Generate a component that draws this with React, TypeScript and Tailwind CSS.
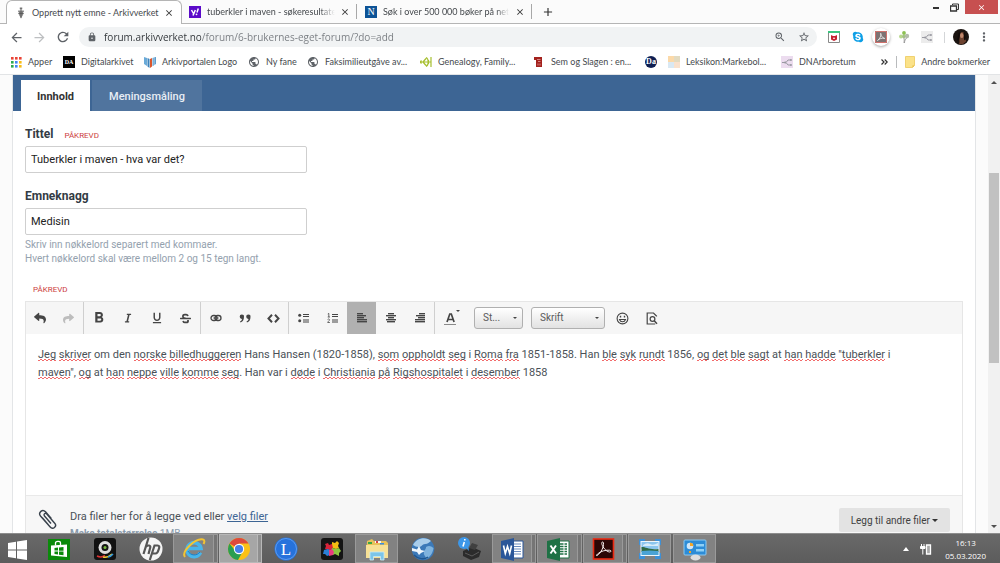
import React from 'react';
import {
  MdArrowBack, MdArrowForward, MdRefresh, MdLock, MdZoomIn, MdStarBorder, MdMoreVert, MdClose, MdAdd,
  MdFormatBold, MdFormatUnderlined, MdPublic,
} from 'react-icons/md';
import { FaReply, FaShare, FaItalic, FaStrikethrough, FaSkype } from 'react-icons/fa';

/* ---------- favicons and bookmark icons ---------- */

function CrestIcon() {
  return (
    <svg viewBox="0 0 12 14" className="h-3 w-3 shrink-0">
      <path d="M4.500 .5h3v2h-3zM3.500 4h5v5L6 13 3.500 9z" fill="#8a8a8a" />
      <path d="M6 1v12M2.500 4.500l1.500 1M9.500 4.500l-1.500 1M2.800 7.500h6.400" stroke="#555" strokeWidth="1" />
    </svg>
  );
}

function YahooIcon() {
  return (
    <svg viewBox="0 0 12 12" className="h-3 w-3 shrink-0">
      <rect width="12" height="12" fill="#5b0bc9" />
      <path d="M2.500 4l2 3.500M6.300 4L4 9.500M9.300 2.500L8 6.500" stroke="#fff" strokeWidth="1.500" fill="none" />
      <circle cx="7.500" cy="8.300" r=".9" fill="#fff" />
    </svg>
  );
}

function LetterBadge({ text, className }: { text: string; className: string }) {
  return (
    <span className={`flex h-3 w-3 shrink-0 items-center justify-center font-['Liberation_Serif',serif] leading-none ${className}`}>
      {text}
    </span>
  );
}

function AppsIcon() {
  const colors = ['#e94335', '#e94335', '#e94335', '#2da94f', '#4285f4', '#f9bc15', '#2da94f', '#4285f4', '#f9bc15'];
  return (
    <svg viewBox="0 0 11 11" className="h-[11px] w-[11px] shrink-0">
      {colors.map((c, i) => (
        <rect key={i} x={(i % 3) * 4} y={Math.floor(i / 3) * 4} width="2.600" height="2.600" fill={c} />
      ))}
    </svg>
  );
}

function PortalIcon() {
  return (
    <svg viewBox="0 0 12 12" className="h-3 w-3 shrink-0">
      <path d="M0 1l3 1v8L0 8z" fill="#6aaad8" />
      <path d="M3.500 2l2 1v9l-2-1.500z" fill="#3d83bb" />
      <path d="M6 3l2-1v8.500L6 12z" fill="#d9562e" />
      <path d="M8.500 2l1.300-.5v8l-1.300.8zM10.300 1.300L12 1v7l-1.700 1z" fill="#5d9ccd" />
    </svg>
  );
}

function GeniIcon() {
  return (
    <svg viewBox="0 0 12 12" className="h-3 w-3 shrink-0" fill="none" stroke="#a6bf2f" strokeWidth="1.200">
      <path d="M0 6h11M3 6l3-3.500M3 6l3 3.500M6 1.500c3 1.500 3 7.500 0 9M8.500 4v4M11 1v10M1.500 4.500L0 6l1.500 1.500" />
    </svg>
  );
}

function SemIcon() {
  return (
    <svg viewBox="0 0 12 12" className="h-3 w-3 shrink-0">
      <path d="M1 1h8v10H3V4H1z" fill="#a3211d" />
      <path d="M4 3.500h3.500M5 5.500h2.500M5 7.500v2M7 7.500v2" stroke="#e3a09c" strokeWidth=".8" />
    </svg>
  );
}

function QuiltIcon() {
  return (
    <svg viewBox="0 0 12 12" className="h-3 w-3 shrink-0">
      <rect width="6" height="6" fill="#fbd9a9" />
      <rect x="6" width="6" height="6" fill="#e2dac0" />
      <rect y="6" width="6" height="6" fill="#d9e8f3" />
      <rect x="6" y="6" width="6" height="6" fill="#f9e1cd" />
    </svg>
  );
}

function BranchIcon({ fill }: { fill: string }) {
  return (
    <svg viewBox="0 0 12 12" className="h-3 w-3 shrink-0">
      <rect width="12" height="12" fill={fill} />
      <path d="M1 6.500h4l2-2.500h4M5 6.500l2 2.500h4" stroke="#9a9aa2" strokeWidth="1" fill="none" />
      <path d="M3.500 5.500h1.500v2H3.500zM9 3.300h1.500v1.500H9zM9 8.300h1.500v1.500H9z" fill="#9a9aa2" />
    </svg>
  );
}

function FolderIcon() {
  return (
    <svg viewBox="0 0 10 12" className="h-3 w-[10px] shrink-0">
      <path d="M.5.5h9v9l-2 2h-7z" fill="#fbe289" stroke="#ecc95c" strokeWidth=".8" />
      <path d="M7.500 11.500v-2h2z" fill="#e3b93f" />
    </svg>
  );
}

/* ---------- browser frame ---------- */

function TabStrip() {
  return (
    <div className="flex h-6 items-stretch bg-[#fbfbfb] font-[Lato,sans-serif] text-[9px] text-[#45494d]">
      <div className="w-[6px] border-b border-[#b5b5b5]" />
      <div className="flex w-[176px] items-center rounded-t-md border border-b-0 border-[#b5b5b5] bg-white pl-2">
        <CrestIcon />
        <span className="ml-[5px] w-[132px] whitespace-nowrap">Opprett nytt emne - Arkivverket</span>
        <button aria-label="Lukk fane"><MdClose className="h-[10px] w-[10px] text-[#333]" /></button>
      </div>
      <div className="flex flex-1 items-center border-b border-[#b5b5b5] pl-[7px]">
        <YahooIcon />
        <span className="ml-[6px] w-[128px] overflow-hidden whitespace-nowrap [mask-image:linear-gradient(to_right,#000_88%,transparent)]">
          tuberkler i maven - søkeresultater
        </span>
        <button aria-label="Lukk fane" className="ml-[5px]"><MdClose className="h-[10px] w-[10px] text-[#333]" /></button>
        <div className="mr-2 ml-[6px] h-[15px] w-px bg-[#a8a8a8]" />
        <LetterBadge text="N" className="bg-[#0d5396] text-[10px] text-white" />
        <span className="ml-[6px] w-[126px] overflow-hidden whitespace-nowrap [mask-image:linear-gradient(to_right,#000_90%,transparent)]">
          Søk i over 500 000 bøker på nett
        </span>
        <button aria-label="Lukk fane" className="ml-[6px]"><MdClose className="h-[10px] w-[10px] text-[#333]" /></button>
        <div className="mr-[9px] ml-[6px] h-[15px] w-px bg-[#a8a8a8]" />
        <button aria-label="Ny fane"><MdAdd className="h-[14px] w-[14px] text-[#333]" /></button>
        <div className="ml-auto flex h-[14px] self-start pr-[2px]">
          <button aria-label="Minimer" className="flex w-[14px] items-end justify-center pb-[5px]">
            <span className="h-[2px] w-[6px] bg-[#333]" />
          </button>
          <button aria-label="Gjenopprett" className="mr-[2px] flex w-[20px] items-center justify-end">
            <svg viewBox="0 0 9 9" className="mr-1 h-[9px] w-[9px]" fill="none" stroke="#333">
              <path d="M2.500 2V1h6v5.500H7" />
              <path d="M.5 3h6v5h-6z" strokeWidth="1.300" />
            </svg>
          </button>
          <button aria-label="Lukk" className="flex w-[33px] items-center justify-center bg-[#c75050]">
            <MdClose className="h-[9px] w-[9px] text-white" />
          </button>
        </div>
      </div>
    </div>
  );
}

function AddressBar() {
  return (
    <div className="flex h-[26px] items-center bg-white pr-[9px] pl-[9px] text-[#5f6368]">
      <button aria-label="Tilbake"><MdArrowBack className="h-[15px] w-[15px]" /></button>
      <button aria-label="Frem" className="ml-2"><MdArrowForward className="h-[15px] w-[15px] text-[#bdbfc1]" /></button>
      <button aria-label="Last inn på nytt" className="ml-2"><MdRefresh className="h-4 w-4" /></button>
      <div className="ml-2 flex h-5 flex-1 items-center rounded-full bg-[#f1f3f4] pr-[7px] pl-2">
        <MdLock className="h-[10px] w-[10px]" />
        <input
          type="text"
          aria-label="Adresse"
          defaultValue="forum.arkivverket.no/forum/6-brukernes-eget-forum/?do=add"
          className="ml-[7px] flex-1 bg-[linear-gradient(90deg,#2f3337_97px,#777b80_97px)] bg-clip-text text-[10px] text-transparent outline-none"
        />
        <button aria-label="Zoom"><MdZoomIn className="h-3 w-3" /></button>
        <button aria-label="Bokmerk siden" className="ml-3"><MdStarBorder className="h-3 w-3" /></button>
      </div>
      <div className="ml-[11px] flex items-center">
        <svg viewBox="0 0 12 12" className="mr-3 h-3 w-3">
          <path d="M.5.5h11v11H.5z" fill="#fff" stroke="#888" />
          <path d="M0 0h12v2H0z" fill="#3bc47f" />
          <path d="M3 4l2 1h2l2-1v4.500L6 10 3 8.500z" fill="#c4202f" />
          <path d="M5 6.500L6 7l1-.5v1L6 8l-1-.5z" fill="#fff" />
        </svg>
        <FaSkype className="mr-2 h-3 w-3 text-[#0d9fe6]" />
        <span className="mr-2 flex h-[18px] w-[18px] items-center justify-center rounded-full bg-white shadow-[0_1px_3px_rgba(0,0,0,0.35)]">
          <svg viewBox="0 0 12 12" className="h-3 w-3">
            <rect width="12" height="12" fill="#7d7272" />
            <path d="M.5.5h11v11H.5z" fill="none" stroke="#d0716c" />
            <path d="M2.500 9.500C5 8 6.500 4 5.800 2.500S6 7 9.800 7.500C7 6.500 4 8 2.500 9.500z" fill="none" stroke="#eee" strokeWidth=".8" />
          </svg>
        </span>
        <svg viewBox="0 0 12 12" className="mr-[11px] h-3 w-3">
          <path d="M6 12c.5-3 .3-5-1-7M6.500 12c0-2 .5-3 2-5" stroke="#999" fill="none" />
          <circle cx="3" cy="5.500" r="1.900" fill="#b7d88c" />
          <circle cx="6" cy="2" r="1.900" fill="#8cc152" />
          <circle cx="9" cy="5" r="2.200" fill="#b4bcac" />
          <circle cx="5.800" cy="5.500" r="1.700" fill="#a3bf85" />
        </svg>
        <BranchIcon fill="#ececec" />
        <div className="mr-2 ml-[11px] h-[11px] w-px bg-[#d4d6d8]" />
        <svg viewBox="0 0 16 16" className="h-4 w-4">
          <circle cx="8" cy="8" r="8" fill="#1b1411" />
          <path d="M9 3c2.500 0 3 3 2.500 6 1 1 1.500 2 1.500 3.500A7 7 0 016 15c1-2 0-3.500.5-5S6.500 3 9 3z" fill="#6d4230" />
          <ellipse cx="8.800" cy="6.500" rx="1.800" ry="2.600" fill="#bf876c" />
          <path d="M6.500 3.500c-1 2-.5 6-2 8M11 4c1.500 2 0 5 1 7" stroke="#130c0a" strokeWidth="1.500" fill="none" />
        </svg>
        <button aria-label="Meny" className="ml-2"><MdMoreVert className="h-[14px] w-[14px]" /></button>
      </div>
    </div>
  );
}

const bookmarks: { label: string; icon: React.ReactNode; width: string }[] = [
  { label: 'Apper', icon: <AppsIcon />, width: 'w-[52px]' },
  { label: 'Digitalarkivet', icon: <LetterBadge text="DA" className="bg-black text-[6px] font-bold text-white" />, width: 'w-[81px]' },
  { label: 'Arkivportalen Logo', icon: <PortalIcon />, width: 'w-[104px]' },
  { label: 'Ny fane', icon: <MdPublic className="h-3 w-3 shrink-0 text-[#5f6368]" />, width: 'w-[59px]' },
  { label: 'Faksimilieutgåve av...', icon: <MdPublic className="h-3 w-3 shrink-0 text-[#5f6368]" />, width: 'w-[113px]' },
  { label: 'Genealogy, Family...', icon: <GeniIcon />, width: 'w-[113px]' },
  { label: 'Sem og Slagen : en...', icon: <SemIcon />, width: 'w-[112px]' },
  { label: '', icon: <LetterBadge text="Da" className="rounded-full bg-[#0e1f52] text-[8px] font-bold text-white" />, width: 'w-[23px]' },
  { label: 'Leksikon:Markebol...', icon: <QuiltIcon />, width: 'w-[113px]' },
  { label: 'DNArboretum', icon: <BranchIcon fill="#ecdcef" />, width: 'w-[88px]' },
];

function BookmarkBar() {
  return (
    <nav className="flex h-[25px] items-center border-b border-[#e2e4e6] bg-white pr-[10px] pl-[11px] font-[Lato,sans-serif] text-[9px] text-[#45494d]">
      {bookmarks.map((b, i) => (
        <a key={i} href="#" aria-label={b.label || 'Da'} className={`flex shrink-0 items-center gap-[6px] whitespace-nowrap ${b.width}`}>
          {b.icon}
          {b.label}
        </a>
      ))}
      <div className="ml-auto flex items-center">
        <button aria-label="Flere bokmerker">
          <svg viewBox="0 0 7 6" className="h-[6px] w-[7px]" fill="none" stroke="#333" strokeWidth="1.200">
            <path d="M.5.5L3 3 .5 5.500M3.700.5L6.200 3 3.700 5.500" />
          </svg>
        </button>
        <div className="mr-2 ml-2 h-3 w-px bg-[#b9bbbd]" />
        <a href="#" className="flex items-center gap-[6px] whitespace-nowrap"><FolderIcon />Andre bokmerker</a>
      </div>
    </nav>
  );
}

/* ---------- editor ---------- */

function Tool({ label, active, children }: { label: string; active?: boolean; children: React.ReactNode }) {
  return (
    <button
      type="button"
      aria-label={label}
      className={`flex w-[29px] items-center justify-center ${active ? 'bg-[#b1b1b1]' : ''}`}
    >
      {children}
    </button>
  );
}

function Lines({ rows }: { rows: [number, number][] }) {
  return (
    <svg viewBox="0 0 10 10" className="h-[10px] w-[10px]" fill="currentColor">
      {rows.map(([x, w], i) => (
        <rect key={i} x={x} y={i * 2} width={w} height="1.400" />
      ))}
    </svg>
  );
}

function ToolGroup({ children }: { children: React.ReactNode }) {
  return <div className="flex border-r border-[#cfcfcf] first:-ml-px">{children}</div>;
}

function Toolbar() {
  return (
    <div className="flex h-8 items-stretch bg-[#f6f6f6] text-[#454545]">
      <ToolGroup>
        <Tool label="Angre"><FaReply className="h-3 w-3" /></Tool>
        <Tool label="Gjør om"><FaShare className="h-[11px] w-[11px] text-[#bdbdbd]" /></Tool>
      </ToolGroup>
      <ToolGroup>
        <Tool label="Fet"><MdFormatBold className="h-[18px] w-[18px]" /></Tool>
        <Tool label="Kursiv"><FaItalic className="h-[10px] w-[10px]" /></Tool>
        <Tool label="Understreking"><MdFormatUnderlined className="h-[14px] w-[14px]" /></Tool>
        <Tool label="Gjennomstreking"><FaStrikethrough className="h-[11px] w-[11px]" /></Tool>
      </ToolGroup>
      <ToolGroup>
        <Tool label="Lenke">
          <svg viewBox="0 0 12 8" className="h-2 w-3" fill="none" stroke="currentColor">
            <rect x="1" y="1.500" width="6" height="5" rx="2.500" strokeWidth="1.300" />
            <rect x="5" y="1.500" width="6" height="5" rx="2.500" strokeWidth="1.300" />
            <path d="M3.500 4h5" strokeWidth="1.200" />
          </svg>
        </Tool>
        <Tool label="Sitat">
          <svg viewBox="0 0 12 9" className="h-[9px] w-3" fill="currentColor">
            <path d="M2.800.5a2.200 2.200 0 012.200 2.400C5 6 3.500 7.800 1.500 8.500L1 7.500c1.200-.6 1.900-1.500 2-2.600A2.200 2.200 0 012.800.5zM9.300.5a2.200 2.200 0 012.200 2.400c0 3.100-1.500 4.900-3.500 5.600l-.5-1c1.200-.6 1.900-1.500 2-2.600A2.200 2.200 0 019.300.5z" />
          </svg>
        </Tool>
        <Tool label="Kode">
          <svg viewBox="0 0 13 9" className="h-[9px] w-[13px]" fill="none" stroke="currentColor" strokeWidth="2">
            <path d="M5 .8L1.500 4.500 5 8.200M8 .8l3.500 3.700L8 8.200" />
          </svg>
        </Tool>
      </ToolGroup>
      <ToolGroup>
        <Tool label="Punktliste">
          <svg viewBox="0 0 11 10" className="h-[10px] w-[11px]" fill="currentColor">
            <circle cx="1.700" cy="2.200" r="1.500" />
            <circle cx="1.700" cy="7.700" r="1.500" />
            <path d="M5 1h6v1H5zM5 3h6v1H5zM5 6.500h6v1H5zM5 8.500h6v1H5z" />
          </svg>
        </Tool>
        <Tool label="Nummerert liste">
          <svg viewBox="0 0 11 10" className="h-[10px] w-[11px]" fill="currentColor">
            <path d="M5 1h6v1H5zM5 3h6v1H5zM5 6.500h6v1H5zM5 8.500h6v1H5z" />
            <path d="M.8 1l1-.6v3.600M.7 4h2.300M.6 6.500c.5-.8 2-.6 1.900.4C2.400 7.800.8 8.500.7 9.500h2.200" fill="none" stroke="currentColor" strokeWidth=".8" />
          </svg>
        </Tool>
        <Tool label="Venstrejuster" active><Lines rows={[[0, 6], [0, 9], [0, 7], [0, 10], [0, 10]]} /></Tool>
        <Tool label="Midtstill"><Lines rows={[[2, 6], [0, 10], [2, 6], [0, 10], [1, 8]]} /></Tool>
        <Tool label="Høyrejuster"><Lines rows={[[4, 6], [1, 9], [3, 7], [0, 10], [0, 10]]} /></Tool>
      </ToolGroup>
      <button type="button" aria-label="Tekstfarge" className="flex w-7 items-center justify-center">
        <svg viewBox="0 0 18 18" className="ml-[3px] h-[18px] w-[18px]">
          <path d="M5 13L7.800 5h1.500l2.800 8M6 10.500h5" stroke="#454545" strokeWidth="1.700" fill="none" />
          <path d="M2 15h12v1H2z" fill="#8a8a8a" />
          <path d="M14 1h4l-2 2z" fill="#454545" />
        </svg>
      </button>
      <FormatSelect label="Størrelse" value="St..." className="ml-[11px] w-[49px] pl-2" />
      <FormatSelect label="Skrifttype" value="Skrift" className="ml-2 w-[74px] pl-2" />
      <button type="button" aria-label="Emoji" className="ml-[11px] flex items-center">
        <svg viewBox="0 0 13 13" className="h-[13px] w-[13px]" fill="none" stroke="currentColor" strokeWidth="1.100">
          <circle cx="6.500" cy="6.500" r="5.400" />
          <path d="M3.500 7.500c1 3 5 3 6 0z" />
          <path d="M4.500 3.700v1.800M8.500 3.700v1.800" strokeWidth="1.400" />
        </svg>
      </button>
      <button type="button" aria-label="Forhåndsvis" className="ml-[17px] flex items-center">
        <svg viewBox="0 0 12 13" className="h-[13px] w-3" fill="none" stroke="currentColor" strokeWidth="1.200">
          <path d="M10.500 4.500V4l-3-3H1.200v11h8" />
          <circle cx="6.500" cy="7" r="2.400" />
          <path d="M8.200 8.700l2.800 3" strokeWidth="1.500" />
        </svg>
      </button>
    </div>
  );
}

function FormatSelect({ label, value, className }: { label: string; value: string; className: string }) {
  return (
    <div className="relative flex items-center">
      <select
        aria-label={label}
        className={`h-[22px] appearance-none rounded-[3px] border border-[#b0b0b0] bg-linear-to-b from-white to-[#e2e2e2] pb-[2px] text-[10px] text-[#5a5a5a] ${className}`}
      >
        <option>{value}</option>
      </select>
      <svg viewBox="0 0 4 2" className="pointer-events-none absolute right-[6px] h-[2px] w-1" fill="#444">
        <path d="M0 0h4L2 2z" />
      </svg>
    </div>
  );
}

/* A misspelled word: two offset rows of dashes make the zigzag underline. */
function Sp({ children }: { children: React.ReactNode }) {
  return (
    <span className="bg-[repeating-linear-gradient(90deg,#f26b6b_0_2px,transparent_2px_4px),repeating-linear-gradient(90deg,transparent_0_2px,#f26b6b_2px_4px)] bg-[size:100%_1px,100%_1px] bg-[position:0_100%,0_calc(100%-1px)] bg-no-repeat">
      {children}
    </span>
  );
}

function Editor() {
  return (
    <div className="mt-1 border border-b-0 border-[#e6e6e6]">
      <Toolbar />
      <div
        role="textbox"
        aria-label="Innlegg"
        aria-multiline="true"
        contentEditable
        suppressContentEditableWarning
        spellCheck={false}
        className="h-[161px] bg-white pt-3 pr-8 pl-3 text-[11px] leading-[18px] text-[#4a5157] outline-none"
      >
        <Sp>Jeg</Sp> <Sp>skriver</Sp> om den <Sp>norske</Sp> <Sp>billedhuggeren</Sp> Hans Hansen (1820-1858), <Sp>som</Sp>{' '}
        <Sp>oppholdt</Sp> <Sp>seg</Sp> i <Sp>Roma</Sp> <Sp>fra</Sp> 1851-1858. Han <Sp>ble</Sp> <Sp>syk</Sp> <Sp>rundt</Sp> 1856,{' '}
        <Sp>og</Sp> <Sp>det</Sp> <Sp>ble</Sp> <Sp>sagt</Sp> at <Sp>han</Sp> <Sp>hadde</Sp> "<Sp>tuberkler</Sp> i <Sp>maven</Sp>",{' '}
        <Sp>og</Sp> at <Sp>han</Sp> <Sp>neppe</Sp> <Sp>ville</Sp> <Sp>komme</Sp> <Sp>seg</Sp>. Han var i <Sp>døde</Sp> i{' '}
        <Sp>Christiania</Sp> <Sp>på</Sp> <Sp>Rigshospitalet</Sp> i <Sp>desember</Sp> 1858
      </div>
      <div className="flex items-start border-t border-[#e9e9e9] bg-[#f7f7f7] px-3 pt-3 pb-4 text-[11px] text-[#4a5157]">
        <svg viewBox="0 0 20 22" className="mt-[1px] h-[22px] w-5 shrink-0" fill="none" stroke="#39424c" strokeWidth="1.400">
          <path d="M13 14.500L6.500 7c-1.500-1.700.8-3.700 2.300-2l7.900 9.200c2.700 3.200-1.800 7-4.500 3.800L2.500 7C-.2 3.500 4.500-.5 7.500 2.800l6 7M10.500 16l-6.200-7.300" />
        </svg>
        <div className="ml-3 leading-[18px]">
          <p>Dra filer her for å legge ved eller <a href="#" className="text-[#3d6594] underline">velg filer</a></p>
          <p className="text-[10px] leading-4 text-[#8a9bad]"><b className="font-bold">Maks totalstørrelse</b> 1MB</p>
        </div>
        <button type="button" className="ml-auto flex h-6 items-center gap-[2px] rounded-[2px] bg-[#e3e3e3] px-3 text-[10px] text-[#3f3f3f]">
          Legg til andre filer
          <svg viewBox="0 0 6 3" className="h-[3px] w-[6px]" fill="#333"><path d="M0 0h6L3 3z" /></svg>
        </button>
      </div>
    </div>
  );
}

function Required() {
  return <span className="text-[8px] text-[#cc3d3d]">PÅKREVD</span>;
}

function ForumPage() {
  return (
    <div className="flex min-h-0 flex-1 overflow-hidden bg-[#fbfbfb] font-[Roboto,sans-serif]">
      <main className="ml-3 min-w-0 flex-1 border-x border-[#e3e5e7] bg-white">
        <div className="flex h-9 items-end bg-[#3d6594] pl-2 text-[11px] font-medium">
          <button type="button" className="h-[31px] bg-white px-4 pt-[3px] font-bold text-[#333]">Innhold</button>
          <button type="button" className="ml-[2px] h-[31px] bg-[#50749e] px-[17px] pt-[3px] text-[#e8eef5]">Meningsmåling</button>
        </div>
        <form className="px-3 pt-[13px]">
          <div>
            <label htmlFor="title" className="flex h-5 items-center gap-[11px] text-[12px] font-bold text-[#333b44]">
              Tittel <span className="font-normal"><Required /></span>
            </label>
            <input
              id="title"
              type="text"
              defaultValue="Tuberkler i maven - hva var det?"
              className="mt-0.5 block h-[27px] w-[282px] rounded-[2px] border border-[#cfcfcf] px-[5px] text-[11px] text-[#222]"
            />
          </div>
          <div className="mt-[13px]">
            <label htmlFor="tags" className="flex h-5 items-center text-[12px] font-bold text-[#333b44]">Emneknagg</label>
            <input
              id="tags"
              type="text"
              defaultValue="Medisin"
              className="mt-0.5 block h-[27px] w-[282px] rounded-[2px] border border-[#cfcfcf] px-[5px] text-[11px] text-[#222]"
            />
            <p className="mt-[3px] text-[10px] leading-[14px] text-[#94a1ae]">
              Skriv inn nøkkelord separert med kommaer.<br />Hvert nøkkelord skal være mellom 2 og 15 tegn langt.
            </p>
          </div>
          <div className="mt-[17px] flex h-[14px] items-center pl-2"><Required /></div>
          <Editor />
        </form>
      </main>
      <div className="ml-3 flex w-3 flex-col items-center bg-[#f1f1f1]">
        <button aria-label="Rull opp" className="flex h-[14px] items-center">
          <svg viewBox="0 0 6 3" className="h-[3px] w-[6px]" fill="#505050"><path d="M0 3h6L3 0z" /></svg>
        </button>
        <div className="grow-[84]" />
        <div className="w-[10px] grow-[190] bg-[#c1c1c1]" />
        <div className="grow-[156]" />
        <button aria-label="Rull ned" className="flex h-[14px] items-center">
          <svg viewBox="0 0 6 3" className="h-[3px] w-[6px]" fill="#505050"><path d="M0 0h6L3 3z" /></svg>
        </button>
      </div>
    </div>
  );
}

/* ---------- taskbar ---------- */

const taskIcons: { name: string; width: string; open?: 'single' | 'stack' | 'active'; art: React.ReactNode }[] = [
  { name: 'Start', width: 'w-9', art: <path d="M2 6l8-1.300v7.800H2zM11 4.500L21 3v9.500H11zM2 13.500h8v7.800L2 20zM11 13.500h10V23l-10-1.500z" fill="#fff" /> },
  {
    name: 'Butikk', width: 'w-[46px]',
    art: (
      <>
        <rect x="1" y="2" width="22" height="21" fill="#0a8a0a" />
        <path d="M4 8.500l16-1V20L4 18.500z" fill="#fff" />
        <path d="M8.500 8.500V6c0-2 5-2.500 5 0v2" fill="none" stroke="#fff" strokeWidth="1.300" />
        <path d="M7.500 11l3.500-.4v3H7.500zM12 10.500l4.500-.5v3.700H12zM7.500 14.500H11v3l-3.500-.4zM12 14.500h4.500v3.700l-4.500-.5z" fill="#0a8a0a" />
      </>
    ),
  },
  {
    name: 'Kamera', width: 'w-[46px]',
    art: (
      <>
        <rect x="1" y="1" width="22" height="22" rx="3" fill="#111" />
        <circle cx="12" cy="10.500" r="6.500" fill="#ddd" />
        <circle cx="12" cy="10.500" r="3.500" fill="#151515" />
        <circle cx="12" cy="10.500" r="1.500" fill="#76b83f" />
        <path d="M4 19q4 2 8-.5" stroke="#d33" strokeWidth="1.500" fill="none" />
        <path d="M10 20q5 1 9-3" stroke="#ec3" strokeWidth="1.500" fill="none" />
        <path d="M15 20q3-.5 5-3" stroke="#39d" strokeWidth="1.500" fill="none" />
      </>
    ),
  },
  {
    name: 'HP', width: 'w-[45px]',
    art: (
      <>
        <circle cx="12" cy="12" r="11.500" fill="#f4f4f4" />
        <path d="M9.500 1L4.500 17M7 9.500c2-1.500 5-1.500 4.200 1.300L9.500 17M10.800 23l4.700-14.500h3c2 0 2 1.500 1.500 3s-1 5-3.500 5h-3" fill="none" stroke="#555" strokeWidth="2.200" />
      </>
    ),
  },
  {
    name: 'Internet Explorer', width: 'w-[46px]', open: 'stack',
    art: (
      <>
        <path d="M18.500 15.500A7 7 0 1119 11.500H7" fill="none" stroke="#48b5ea" strokeWidth="3.600" />
        <path d="M18 15A7 7 0 016 14" fill="none" stroke="#1c7ec8" strokeWidth="1" />
        <path d="M3 20C-1 15 13 1 21 2.500c2 .5 1.500 2.500.5 4.500" fill="none" stroke="#f3c432" strokeWidth="2" />
      </>
    ),
  },
  {
    name: 'Chrome', width: 'w-11', open: 'active',
    art: (
      <>
        <circle cx="12" cy="12" r="11" fill="#fbc116" />
        <path d="M12 12L2.500 6.500A11 11 0 0121.500 6.500H12z" fill="#dd4a3c" />
        <path d="M2.500 6.500A11 11 0 0011 23l5-9-4 1-4-1.500z" fill="#2b9e51" />
        <circle cx="12" cy="12" r="5.200" fill="#fff" />
        <circle cx="12" cy="12" r="4.100" fill="#4680e8" />
      </>
    ),
  },
  {
    name: 'L', width: 'w-[46px]',
    art: (
      <>
        <circle cx="12" cy="12" r="11.500" fill="#2672dc" />
        <circle cx="12" cy="12" r="10.500" fill="none" stroke="#5b9bef" strokeWidth="1" />
        <text x="12" y="18" textAnchor="middle" fontSize="17" fill="#fff" fontFamily="Liberation Serif, serif">L</text>
      </>
    ),
  },
  {
    name: 'Puslespill', width: 'w-[46px]',
    art: (
      <>
        <rect x="1" y="1" width="22" height="22" rx="3" fill="#141414" />
        <path d="M12 5l3 1 2-2 2 2-1 3 1 2-3 1-4-1z" fill="#f3bd13" />
        <path d="M5 7l3-1 1 2 3-1 1 4-3 2-5-1 1-3z" fill="#d8243a" />
        <path d="M4 13l4-1 2 1-1 3 1 2-3 1-2-2-2 0z" fill="#2b7fd6" />
        <path d="M12 11l4 1 3-1 2 3-2 2 0 3-4-2-2 1-3-2z" fill="#8dc63f" />
        <path d="M9 13l3-1 2 3-1 3-4 1z" fill="#e93b80" />
      </>
    ),
  },
  {
    name: 'Filutforsker', width: 'w-[45px]', open: 'single',
    art: (
      <>
        <path d="M2 4l5-2 2 2h12l2 2v15H1z" fill="#e8c25a" />
        <path d="M3 5h4v2H3z" fill="#3aa845" />
        <path d="M10 4h6v2h-6z" fill="#f8f8f8" />
        <path d="M11 4h2v2h-2z" fill="#d44" />
        <path d="M1 8h22v13H1z" fill="#f7e196" />
        <path d="M15 6h4v1.500h-4z" fill="#3b8de0" />
        <path d="M5 23v-8h14v8h-3.500v-3.500h-7V23z" fill="#7cc5e8" stroke="#c9ebf8" strokeWidth=".8" />
      </>
    ),
  },
  {
    name: 'Nettleser', width: 'w-[45px]',
    art: (
      <>
        <circle cx="12" cy="12" r="11.300" fill="#3b79b8" />
        <path d="M2 8C5 1 15-1 20 4c-2 1-3 3-6 3s-3 3-6 3-4-1-6-2z" fill="#a9cdea" />
        <path d="M15 10c3-2 5-1 7.500 1-.5 5-3.500 9-7.500 11 0-3-3-4-2-7s2-3 2-5z" fill="#7fb3de" />
        <path d="M1 11l5 1.500L8 9l2 4 4 1-4 2-2 2-2-3-5-1z" fill="#eef6fc" />
        <path d="M3 18c4 4 10 5 14 2" fill="none" stroke="#1f5791" strokeWidth="1.500" />
      </>
    ),
  },
  {
    name: 'Skriver', width: 'w-[47px]',
    art: (
      <>
        <path d="M6 14l9-4 9 4-2 6-8 3-8-4z" fill="#2b2b2b" />
        <path d="M12 11l3-5 6 2-3 5z" fill="#404040" />
        <path d="M8 16l7 3 7-4" fill="none" stroke="#666" strokeWidth=".8" />
        <circle cx="7" cy="6" r="6" fill="#3d97e8" />
        <path d="M8 10l4 4-1-6z" fill="#3d97e8" />
        <path d="M7.800 2v1.600M7.300 5L6 9.500" stroke="#fff" strokeWidth="1.600" />
      </>
    ),
  },
  {
    name: 'Word', width: 'w-[45px]', open: 'stack',
    art: (
      <>
        <path d="M13 4h10v17H13z" fill="#fff" stroke="#2b579a" />
        <path d="M14 7h7M14 9.500h7M14 12h7M14 14.500h7M14 17h7" stroke="#6b8cbf" />
        <path d="M1 4l13-3v23L1 21z" fill="#2a5699" />
        <path d="M3.500 8.500l1.800 8 2.200-7 2.200 7 1.800-8" stroke="#fff" strokeWidth="1.600" fill="none" />
      </>
    ),
  },
  {
    name: 'Excel', width: 'w-[46px]', open: 'stack',
    art: (
      <>
        <path d="M13 4h10v17H13z" fill="#fff" stroke="#207245" />
        <path d="M14 7h7M14 9.500h7M14 12h7M14 14.500h7M14 17h7" stroke="#207245" strokeWidth="1.300" />
        <path d="M18 5v15" stroke="#fff" />
        <path d="M1 4l13-3v23L1 21z" fill="#1e7145" />
        <path d="M4.500 8.500l5.500 8M10 8.500l-5.500 8" stroke="#fff" strokeWidth="1.900" />
      </>
    ),
  },
  {
    name: 'Acrobat Reader', width: 'w-[45px]', open: 'stack',
    art: (
      <>
        <rect x="2.500" y="2" width="20" height="20" fill="#2b0605" stroke="#ea2a12" strokeWidth="1.600" />
        <path d="M6 18.500c4-2 7-9 6.500-12.500-.5-2-2.500-1-1.500 1.500 1 3 4 7 7.500 7.500 2 0 2-1.700 0-1.800-4-.3-9 1-12 3.800-1 1-1.500 2-.5 1.500z" fill="none" stroke="#f3eaea" strokeWidth="1" />
      </>
    ),
  },
  {
    name: 'Bildevisning', width: 'w-[45px]', open: 'single',
    art: (
      <>
        <path d="M1 2h6v6H1zM17 2h6v6h-6zM1 16h6v6H1zM17 16h6v6h-6z" fill="#3e90d6" />
        <rect x="2.500" y="4" width="19" height="15" fill="#eef6fb" />
        <path d="M3.500 5h17v7h-17z" fill="#8cc6ee" />
        <path d="M5 8q4-3 7-1t8-1v3H5z" fill="#d8ecf9" />
        <path d="M3.500 10c5 0 7 3 17 2v3h-17z" fill="#2f6a44" />
        <path d="M3.500 14q8-1 17 0v4h-17z" fill="#4ba3d5" />
      </>
    ),
  },
  {
    name: 'Kontrollpanel', width: 'w-[45px]', open: 'single',
    art: (
      <>
        <rect x="1" y="3" width="22" height="15" rx="1" fill="#2d8cd6" stroke="#8cc8f0" />
        <circle cx="7" cy="9" r="3.300" fill="#cfe6f8" />
        <path d="M7 9V5.700A3.300 3.300 0 0110.300 9zM6 14h2v2H6z" fill="#f5a623" />
        <path d="M13 7h8v2.500h-8zM13 12h8v2.500h-8z" fill="#8fd0f5" />
        <ellipse cx="12.500" cy="20.500" rx="5" ry="3" fill="#ddd" />
      </>
    ),
  },
];

function openStyle(open?: 'single' | 'stack' | 'active') {
  if (open === 'active') return 'border border-[#b8b8b8] bg-[#a6a6a6]';
  if (open) return 'border border-[#9a9a9a] bg-[#828282]';
  return '';
}

function Taskbar() {
  return (
    <footer className="flex h-[30px] shrink-0 items-stretch border-t border-[#8d8d8d] bg-linear-to-b from-[#696969] to-[#5c5c5c]">
      {taskIcons.map((t) => (
        <div key={t.name} className={`flex shrink-0 ${t.width}`}>
          <button aria-label={t.name} className={`flex flex-1 items-center justify-center ${openStyle(t.open)}`}>
            <svg viewBox="0 0 24 24" className="h-6 w-6">{t.art}</svg>
          </button>
          {(t.open === 'stack' || t.open === 'active') && (
            <div className={`mr-px w-1 border-y border-r ${t.open === 'active' ? 'border-[#b8b8b8] bg-[#8f8f8f]' : 'border-[#9a9a9a] bg-[#757575]'}`} />
          )}
          {t.open === 'single' && <div className="w-[2px]" />}
        </div>
      ))}
      <div className="ml-auto flex items-center pr-[14px] text-white">
        <svg viewBox="0 0 6 4" className="mr-[11px] h-1 w-[6px]" fill="#fff"><path d="M0 4h6L3 0z" /></svg>
        <svg viewBox="0 0 12 12" className="mr-[13px] h-3 w-3" fill="none" stroke="#fff">
          <path d="M6.500 2h4v9h-4z" fill="#aaa" strokeWidth="1.300" />
          <path d="M1.500 1v3M4 1v3M2.800 6v5.500" />
          <path d="M.5 3.500H5v2H.5z" fill="#fff" />
        </svg>
        <div className="text-center text-[8px] leading-[13px]">
          <div>16:13</div>
          <div>05.03.2020</div>
        </div>
      </div>
    </footer>
  );
}

export default function App() {
  return (
    <div className="flex h-screen flex-col overflow-hidden bg-white font-['Open_Sans','Noto_Sans',sans-serif]">
      <header className="shrink-0">
        <TabStrip />
        <AddressBar />
        <BookmarkBar />
      </header>
      <ForumPage />
      <Taskbar />
    </div>
  );
}
